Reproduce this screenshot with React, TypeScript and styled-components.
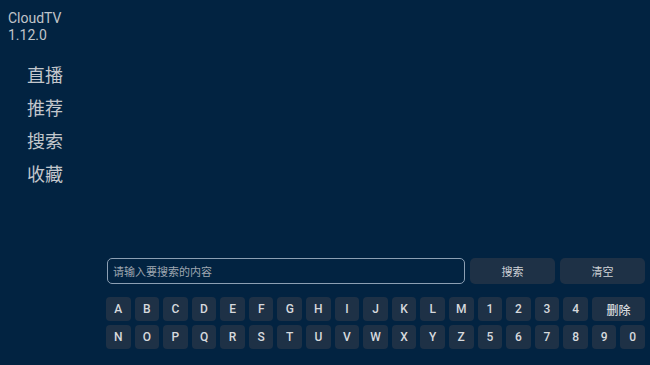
import styled, { createGlobalStyle } from "styled-components";
import { useState } from "react";

const GlobalStyle = createGlobalStyle`
  html, body {
    margin: 0;
    padding: 0;
    background: #022341;
  }
  body {
    font-family: Roboto, "Noto Sans CJK SC", sans-serif;
  }
  * {
    box-sizing: border-box;
  }
`;

const Screen = styled.div`
  width: 650px;
  height: 365px;
  display: flex;
  background: #022341;
  color: #c3c7cc;
  overflow: hidden;
`;

const Sidebar = styled.div`
  width: 100px;
  flex-shrink: 0;
  display: flex;
  flex-direction: column;
  padding: 10px 0 0 8px;
`;

const AppName = styled.div`
  font-size: 14px;
  line-height: 17px;
  color: #c0c4c9;
`;

const Menu = styled.nav`
  display: flex;
  flex-direction: column;
  gap: 11px;
  margin: 19px 0 0 19px;
`;

const MenuItem = styled.div`
  font-family: "Noto Sans CJK SC", sans-serif;
  font-size: 18px;
  line-height: 22px;
  color: #c3c7cc;
`;

const Main = styled.div`
  flex: 1;
  display: flex;
  flex-direction: column;
  justify-content: flex-end;
  padding: 0 5px 16px 6px;
`;

const SearchRow = styled.div`
  display: flex;
  gap: 5px;
  margin-bottom: 13px;
  padding-left: 1px;
`;

const Input = styled.input`
  flex: 1;
  height: 26px;
  background: transparent;
  border: 1.5px solid #8c9fb3;
  border-radius: 5px;
  padding: 0 5px;
  font-family: "Noto Sans CJK SC", sans-serif;
  font-size: 11px;
  color: #c3c7cc;
  outline: none;
  &::placeholder {
    color: #9ea6b0;
  }
`;

const ActionButton = styled.button`
  width: 85px;
  height: 26px;
  border: none;
  border-radius: 5px;
  background: #1e3146;
  color: #d0d3d7;
  font-family: "Noto Sans CJK SC", sans-serif;
  font-size: 11px;
`;

const Keyboard = styled.div`
  display: grid;
  grid-template-columns: repeat(19, 1fr);
  grid-auto-rows: 24px;
  gap: 4px 4px;
`;

const Key = styled.button<{ $wide?: boolean }>`
  grid-column: span ${(p) => (p.$wide ? 2 : 1)};
  border: none;
  border-radius: 4px;
  background: #1e3146;
  color: #d6d9dd;
  font-family: ${(p) => (p.$wide ? '"Noto Sans CJK SC", sans-serif' : "Roboto, sans-serif")};
  font-size: ${(p) => (p.$wide ? "12px" : "12px")};
  font-weight: 500;
  padding: 0;
`;

const row1 = "ABCDEFGHIJKLM1234".split("");
const row2 = "NOPQRSTUVWXYZ567890".split("");

export default function App() {
  const [text, setText] = useState("");

  return (
    <>
      <GlobalStyle />
      <Screen>
        <Sidebar>
          <AppName>CloudTV</AppName>
          <AppName>1.12.0</AppName>
          <Menu>
            {["直播", "推荐", "搜索", "收藏"].map((m) => (
              <MenuItem key={m}>{m}</MenuItem>
            ))}
          </Menu>
        </Sidebar>
        <Main>
          <SearchRow>
            <Input
              placeholder="请输入要搜索的内容"
              value={text}
              onChange={(e) => setText(e.target.value)}
            />
            <ActionButton>搜索</ActionButton>
            <ActionButton onClick={() => setText("")}>清空</ActionButton>
          </SearchRow>
          <Keyboard>
            {row1.map((k) => (
              <Key key={k} onClick={() => setText((t) => t + k)}>
                {k}
              </Key>
            ))}
            <Key $wide onClick={() => setText((t) => t.slice(0, -1))}>
              删除
            </Key>
            {row2.map((k) => (
              <Key key={k} onClick={() => setText((t) => t + k)}>
                {k}
              </Key>
            ))}
          </Keyboard>
        </Main>
      </Screen>
    </>
  );
}
